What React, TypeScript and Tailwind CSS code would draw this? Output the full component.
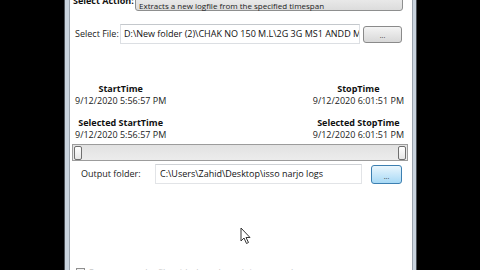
import React from 'react';

const font = { fontFamily: '"Open Sans", "Noto Sans", sans-serif' };

function BrowseButton({ hover }: { hover?: boolean }) {
  return (
    <div
      className={
        hover
          ? 'flex h-[19px] w-[31px] items-end justify-center rounded-[3px] border border-[#3c7fb1] bg-gradient-to-b from-[#eaf6fd] to-[#a7d9f5] pb-[3px] text-[7px] leading-none text-[#333]'
          : 'flex h-[17px] w-[39px] items-end justify-center rounded-[3px] border border-[#8a8a8a] bg-gradient-to-b from-[#f4f4f4] to-[#d8d8d8] pb-[3px] text-[7px] leading-none text-[#333]'
      }
    >
      ...
    </div>
  );
}

function TimeBlock({ label, value }: { label: string; value: string }) {
  return (
    <div className="flex flex-col items-center">
      <div className="h-[12px] whitespace-nowrap text-[9px] font-bold leading-[12px] text-[#111]">{label}</div>
      <div className="h-[12px] whitespace-nowrap text-[9px] leading-[12px] text-[#222]">{value}</div>
    </div>
  );
}

export default function App() {
  return (
    <div className="flex h-[270px] w-[480px] overflow-hidden bg-black" style={font}>
      <div className="w-[64px] shrink-0" />

      {/* window frame */}
      <div className="relative flex h-full w-[353px] shrink-0 border-l border-r border-[#4a4f55] bg-[#c9d3dd]">
        <div className="ml-[4px] mr-[3px] flex flex-1 flex-col overflow-hidden border-l border-r border-[#9aa3ad] bg-white">
          {/* Select Action */}
          <div className="mt-[-7px] flex h-[18px] items-center pl-[3px]">
            <span className="mt-[-3px] w-[62px] whitespace-nowrap text-[9px] font-bold leading-none text-[#111]">Select Action:</span>
            <div className="flex h-[18px] w-[268px] items-center whitespace-nowrap rounded-[3px] border border-[#8e8f8f] bg-gradient-to-b from-[#f0f0f0] to-[#dcdcdc] pl-[3px] pt-[7px] text-[8px] leading-none text-[#222]">
              Extracts a new logfile from the specified timespan
            </div>
          </div>

          {/* Select File */}
          <div className="mt-[13px] flex items-center pl-[5px]">
            <span className="w-[45px] whitespace-nowrap text-[9px] text-[#222]">Select File:</span>
            <div className="flex h-[20px] w-[240px] items-center overflow-hidden whitespace-nowrap border border-[#dcdfe3] border-t-[#c4c8cc] bg-white pl-[3px] text-[9px] text-[#111]">
              D:\New folder (2)\CHAK NO 150 M.L\2G 3G MS1 ANDD MS2
            </div>
            <div className="ml-[3px]">
              <BrowseButton />
            </div>
          </div>

          {/* Times */}
          <div className="mt-[39px] flex justify-between pl-[5px] pr-[8px]">
            <TimeBlock label="StartTime" value="9/12/2020 5:56:57 PM" />
            <TimeBlock label="StopTime" value="9/12/2020 6:01:51 PM" />
          </div>
          <div className="mt-[10px] flex justify-between pl-[5px] pr-[8px]">
            <TimeBlock label="Selected StartTime" value="9/12/2020 5:56:57 PM" />
            <TimeBlock label="Selected StopTime" value="9/12/2020 6:01:51 PM" />
          </div>

          {/* range slider */}
          <div className="ml-[2px] mr-[4px] mt-[3px] flex h-[17px] items-center justify-between border border-[#9c9c9c] bg-gradient-to-b from-[#e2e2e2] to-[#ececec] px-[1px]">
            <div className="h-[14px] w-[8px] rounded-[2px] border border-[#6f6f6f] bg-gradient-to-b from-white to-[#e6e6e6]" />
            <div className="h-[14px] w-[8px] rounded-[2px] border border-[#6f6f6f] bg-gradient-to-b from-white to-[#e6e6e6]" />
          </div>

          {/* Output folder */}
          <div className="mt-[3px] flex items-center pl-[11px]">
            <span className="w-[74px] whitespace-nowrap text-[9px] text-[#222]">Output folder:</span>
            <div className="flex h-[20px] w-[207px] items-center overflow-hidden whitespace-nowrap border border-[#e2e4e7] border-t-[#cfd2d6] bg-white pl-[4px] text-[9px] text-[#111]">
              C:\Users\Zahid\Desktop\isso narjo logs
            </div>
            <div className="ml-[9px]">
              <BrowseButton hover />
            </div>
          </div>

          <div className="flex-1" />

          {/* cut-off checkbox row */}
          <div className="mb-[-8px] flex h-[12px] items-center gap-[3px] pl-[6px]">
            <div className="h-[9px] w-[9px] border border-[#8f8f8f] bg-gradient-to-b from-[#f4f4f4] to-[#dedede]" />
            <span className="whitespace-nowrap text-[9px] leading-none text-[#c8c8c8]">Create a new logfile with the selected timespan data</span>
          </div>
        </div>

        {/* mouse cursor */}
        <svg
          className="absolute left-[175px] top-[227px]"
          width="12"
          height="18"
          viewBox="0 0 12 18"
        >
          <path
            d="M1 1 L1 14 L4 11 L6.5 16.5 L8.5 15.5 L6 10.5 L10 10.5 Z"
            fill="white"
            stroke="#333"
            strokeWidth="1"
            strokeLinejoin="round"
          />
        </svg>
      </div>

      <div className="flex-1" />
    </div>
  );
}
